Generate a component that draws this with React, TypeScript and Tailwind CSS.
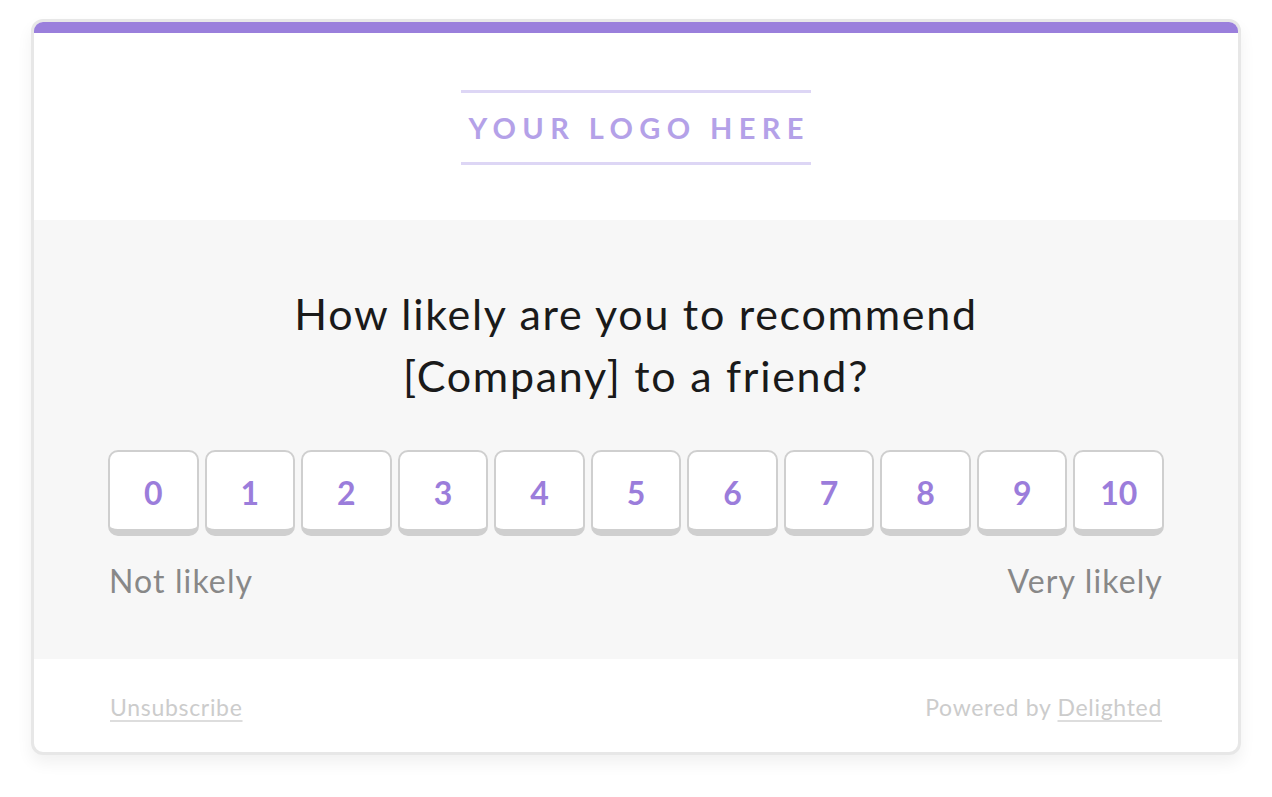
import React from "react";

export default function App() {
  const nums = [0, 1, 2, 3, 4, 5, 6, 7, 8, 9, 10];
  return (
    <div className="min-h-[797px] bg-white pt-[19px]" style={{ fontFamily: "Lato, 'Open Sans', sans-serif" }}>
      <div className="mx-auto w-[1210px] rounded-[12px] border-[3px] border-[#e7e7e7] overflow-hidden bg-white shadow-[0_8px_16px_rgba(0,0,0,0.06)]">
        <div className="h-[11px] bg-[#9a7fdc]" />
        <div className="h-[187px] pt-[57px] flex justify-center">
          <div className="w-[350px] border-y-[3px] border-[#ddd6f5] h-[75px] flex items-center justify-center">
            <span className="text-[29px] font-bold tracking-[0.22em] text-[#b4a1e8] pl-[0.22em] leading-none">YOUR LOGO HERE</span>
          </div>
        </div>
        <div className="bg-[#f7f7f7] pt-[63px] pb-[60px] px-[74px]">
          <div className="text-center text-[43px] leading-[62px] tracking-[0.04em] text-[#1a1a1a]">
            How likely are you to recommend
            <br />
            [Company] to a friend?
          </div>
          <div className="mt-[43px] flex gap-[6px]">
            {nums.map((n) => (
              <div
                key={n}
                className="flex-1 h-[86px] pt-[5px] rounded-[10px] border-2 border-b-[7px] border-[#cfcfcf] bg-white flex items-center justify-center text-[32px] font-bold text-[#9b7ddb]"
              >
                {n}
              </div>
            ))}
          </div>
          <div className="mt-[27px] flex justify-between text-[32px] leading-[36px] tracking-[0.035em] text-[#888888] px-[1px]">
            <span>Not likely</span>
            <span>Very likely</span>
          </div>
        </div>
        <div className="pt-[33px] pb-[30px] px-[76px] flex justify-between text-[23px] leading-[30px] tracking-[0.03em] text-[#cccccc]">
          <span className="underline underline-offset-[4px] decoration-[#dddddd]">Unsubscribe</span>
          <span>
            Powered by <span className="underline underline-offset-[4px] decoration-[#dddddd]">Delighted</span>
          </span>
        </div>
      </div>
    </div>
  );
}
